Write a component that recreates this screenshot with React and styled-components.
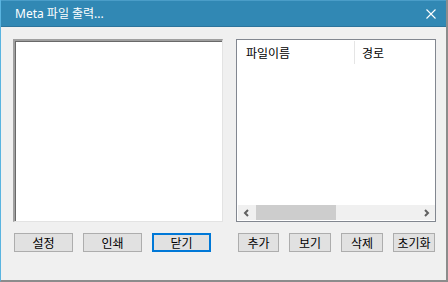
import React from 'react';
import styled, { createGlobalStyle } from 'styled-components';

const GlobalStyle = createGlobalStyle`
  html, body {
    margin: 0;
    padding: 0;
    background: #f0f0f0;
  }
  * {
    box-sizing: border-box;
  }
`;

const leftButtons = ['설정', '인쇄', '닫기'];
const rightButtons = [
  { label: '추가', width: 41 },
  { label: '보기', width: 42 },
  { label: '삭제', width: 42 },
  { label: '초기화', width: 42 },
];

function Chevron({ dir }) {
  const points = dir === 'left' ? '5,1 2,4 5,7' : '2,1 5,4 2,7';
  return (
    <svg width="7" height="8" viewBox="0 0 7 8">
      <polyline points={points} fill="none" stroke="#606060" strokeWidth="2" />
    </svg>
  );
}

export default function App() {
  return (
    <>
      <GlobalStyle />
      <Window>
        <TitleBar>
          <span>Meta 파일 출력...</span>
          <CloseIcon width="10" height="10" viewBox="0 0 10 10">
            <path d="M0.5 0.5 L9.5 9.5 M9.5 0.5 L0.5 9.5" stroke="#fff" strokeWidth="1.1" />
          </CloseIcon>
        </TitleBar>
        <Body>
          <Column>
            <SunkenBox />
            <ButtonRow $pad={1}>
              {leftButtons.map((b) => (
                <Button key={b} $width={59} $default={b === '닫기'}>{b}</Button>
              ))}
            </ButtonRow>
          </Column>
          <Column>
            <ListView>
              <ListHeader>
                <HeaderCell $width={118} $pad={9}>파일이름</HeaderCell>
                <HeaderCell $pad={7} $last>경로</HeaderCell>
              </ListHeader>
              <ListBody />
              <HScroll>
                <ArrowBtn><Chevron dir="left" /></ArrowBtn>
                <Track>
                  <Thumb />
                </Track>
                <ArrowBtn><Chevron dir="right" /></ArrowBtn>
              </HScroll>
            </ListView>
            <ButtonRow $pad={2}>
              {rightButtons.map((b) => (
                <Button key={b.label} $width={b.width}>{b.label}</Button>
              ))}
            </ButtonRow>
          </Column>
        </Body>
      </Window>
    </>
  );
}

const Window = styled.div`
  width: 448px;
  height: 282px;
  display: flex;
  flex-direction: column;
  background: #f0f0f0;
  border-left: 1px solid #5ab4e0;
  border-right: 2px solid #8c8c8c;
  border-bottom: 2px solid #8c8c8c;
  font-family: "Noto Sans CJK KR", "Noto Sans", sans-serif;
  font-size: 12px;
  color: #000;
`;

const TitleBar = styled.div`
  height: 27px;
  flex: none;
  display: flex;
  align-items: center;
  justify-content: space-between;
  padding: 0 10px 1px 14px;
  background: #3188b4;
  border-top: 1px solid #4a9dc8;
  border-bottom: 1px solid #2c749c;
  color: #fff;
  font-family: "Noto Sans", "Noto Sans CJK KR", sans-serif;
  font-size: 12px;
`;

const CloseIcon = styled.svg`
  display: block;
  margin-top: 1px;
`;

const Body = styled.div`
  flex: 1;
  display: grid;
  grid-template-columns: 210px 200px;
  column-gap: 13px;
  padding: 12px 0 0 12px;
`;

const Column = styled.div`
  display: flex;
  flex-direction: column;
`;

const SunkenBox = styled.div`
  height: 183px;
  background: #fff;
  border-top: 2px solid #a0a0a0;
  border-left: 2px solid #a0a0a0;
  border-right: 1px solid #e3e3e3;
  border-bottom: 1px solid #e3e3e3;
  box-shadow: inset 1px 1px 0 #696969;
`;

const ListView = styled.div`
  height: 183px;
  display: flex;
  flex-direction: column;
  background: #fff;
  border: 1px solid #828790;
  padding-bottom: 1px;
`;

const ListHeader = styled.div`
  height: 24px;
  display: flex;
  align-items: stretch;
`;

const HeaderCell = styled.div`
  width: ${(p) => (p.$width ? `${p.$width}px` : 'auto')};
  flex: ${(p) => (p.$last ? '1' : 'none')};
  display: flex;
  align-items: center;
  padding-left: ${(p) => p.$pad}px;
  border-right: ${(p) => (p.$last ? 'none' : '1px solid #e5e5e5')};
  margin-top: 1px;
`;

const ListBody = styled.div`
  flex: 1;
`;

const HScroll = styled.div`
  height: 15px;
  margin-left: 1px;
  display: flex;
  background: #f0f0f0;
`;

const ArrowBtn = styled.div`
  width: 17px;
  display: flex;
  align-items: center;
  justify-content: center;
`;

const Track = styled.div`
  flex: 1;
  display: flex;
  padding-left: 1px;
`;

const Thumb = styled.div`
  width: 80px;
  background: #cdcdcd;
`;

const ButtonRow = styled.div`
  display: flex;
  gap: 10px;
  margin-top: 11px;
  padding-left: ${(p) => p.$pad}px;
`;

const Button = styled.div`
  width: ${(p) => p.$width}px;
  height: 19px;
  display: flex;
  align-items: center;
  justify-content: center;
  background: #e1e1e1;
  border: ${(p) => (p.$default ? '2px solid #0078d7' : '1px solid #adadad')};
  font-size: 12px;
  line-height: 1;
`;
